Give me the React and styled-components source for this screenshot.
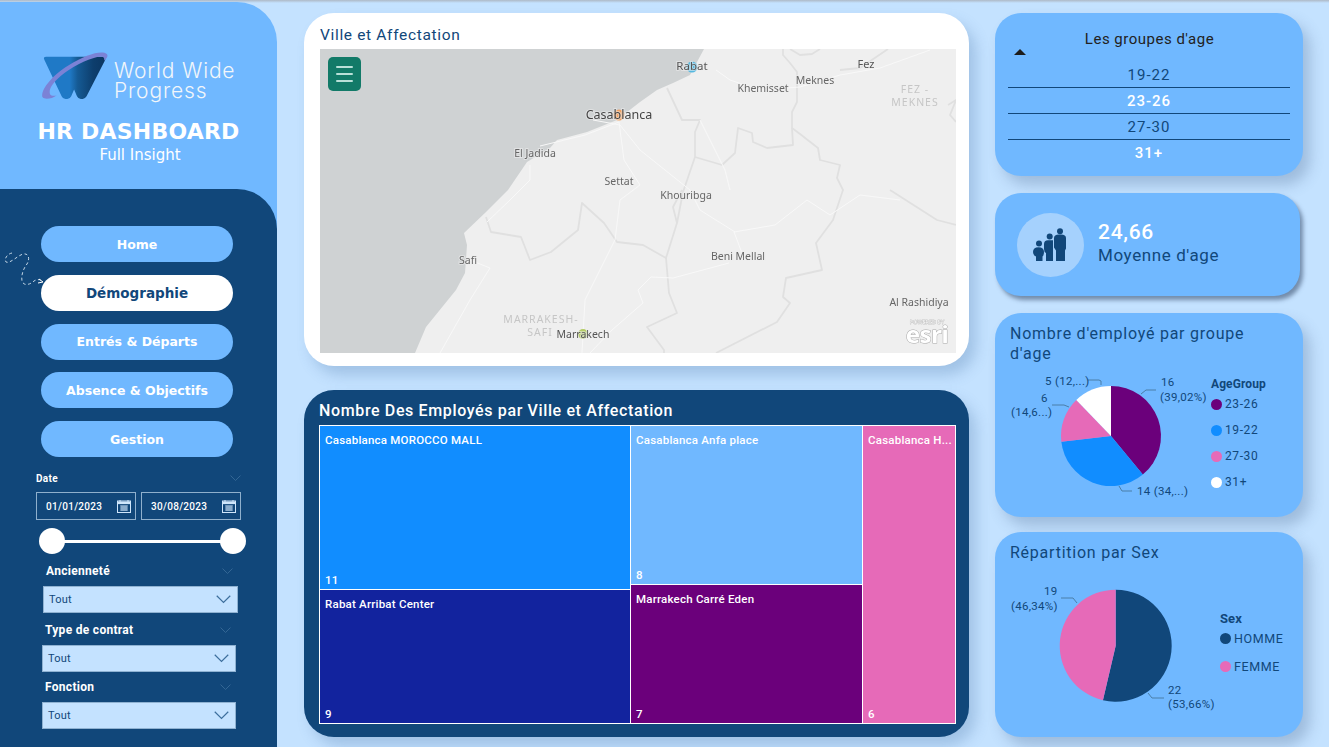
import React from "react";
import styled, { createGlobalStyle } from "styled-components";

const LIGHT = "#70b8ff";
const DARK = "#11477a";
const PALE = "#c4e2ff";
const DIN = `Roboto, "Liberation Sans", sans-serif`;
const VERD = `"DejaVu Sans", Verdana, sans-serif`;

const Global = createGlobalStyle`
  html, body { margin: 0; padding: 0; background: ${PALE}; }
  * { box-sizing: border-box; }
`;

const Page = styled.div`
  width: 1329px; height: 747px; overflow: hidden;
  display: flex; align-items: stretch;
  background: linear-gradient(#aeb9c6 0, ${PALE} 3px);
  font-family: ${DIN};
`;

/* ---------- sidebar ---------- */
const Sidebar = styled.aside`
  width: 277px; margin-top: 2px; flex: none;
  display: flex; flex-direction: column;
  background: ${LIGHT}; border-radius: 0 40px 0 0; overflow: hidden;
`;
const Brand = styled.div`
  height: 187px; flex: none;
  display: flex; flex-direction: column; align-items: center;
  padding: 50px 0 0 3px; color: #fff;
`;
const LogoRow = styled.div`
  display: flex; align-items: center; align-self: flex-start; margin-left: 38px; height: 48px;
`;
const LogoText = styled.div`
  font-family: Inter, sans-serif; font-weight: 300; font-size: 21px; line-height: 20px;
  letter-spacing: .85px; color: #f2f6fa; margin: 10px 0 0 3px; white-space: nowrap;
`;
const Title = styled.div`
  font-family: ${VERD}; font-weight: 700; font-size: 22px; line-height: 24px;
  letter-spacing: .2px; margin: 20px 3px 0 0;
`;
const Subtitle = styled.div`
  font-family: ${VERD}; font-size: 15px; line-height: 18px; margin-top: 2px;
`;
const DarkPane = styled.div`
  flex: 1; background: ${DARK}; border-radius: 0 40px 0 0;
  padding: 37px 0 0; position: relative;
`;
const Nav = styled.nav`
  display: flex; flex-direction: column; gap: 12.75px; padding-left: 41px;
`;
const NavButton = styled.div`
  width: 192px; height: 36px; border-radius: 18px; flex: none;
  display: flex; align-items: center; justify-content: center;
  font-family: ${VERD}; font-weight: 700;
  font-size: ${p => (p.$active ? "13.5px" : "12.5px")};
  background: ${p => (p.$active ? "#fff" : LIGHT)};
  color: ${p => (p.$active ? DARK : "#fff")};
`;
const Trail = styled.svg`
  position: absolute; left: 3px; top: 59px; width: 44px; height: 44px;
`;
const DateHead = styled.div`
  display: flex; justify-content: space-between; align-items: center;
  margin: 13px 36px 0 36px; height: 16px;
  color: #fff; font-size: 10px; font-weight: 700; letter-spacing: .3px;
`;
const DateRow = styled.div`
  display: flex; gap: 5px; margin: 6px 0 0 36px;
`;
const DateBox = styled.div`
  width: 100px; height: 28px; border: 1px solid #8fb0cd;
  display: flex; align-items: center; justify-content: space-between;
  padding: 0 4px 0 9px; color: #fff; font-size: 10px; font-weight: 500; letter-spacing: .3px;
`;
const Slider = styled.div`
  height: 26px; margin: 8px 0 0 39px; width: 207px; position: relative;
  display: flex; align-items: center; justify-content: space-between;
  &::before { content: ""; position: absolute; left: 8px; right: 8px; top: 12px; height: 3px; background: #fff; }
`;
const Knob = styled.span`
  width: 26px; height: 26px; border-radius: 50%; background: #fff; position: relative;
`;
const Filter = styled.div`
  margin: ${p => p.$top}px 0 0 ${p => p.$left}px; width: ${p => p.$width}px;
`;
const FilterHead = styled.div`
  display: flex; justify-content: space-between; align-items: center; height: 16px;
  color: #fff; font-size: 12px; font-weight: 700; letter-spacing: .3px; padding: 0 5px 0 3px;
`;
const Select = styled.div`
  height: 27px; margin-top: 7px; background: ${PALE}; border: 1px solid #8fb2d2;
  display: flex; align-items: center; justify-content: space-between;
  padding: 0 6px 0 5px; color: ${DARK}; font-size: 11px; letter-spacing: .2px;
`;

const Chevron = ({ size = 12, color = "#3a6c98" }) => (
  <svg width={size} height={size * 0.6} viewBox="0 0 20 12" fill="none">
    <path d="M1 1l9 9 9-9" stroke={color} strokeWidth="1.6" />
  </svg>
);
const CalendarIcon = () => (
  <svg width="14" height="13" viewBox="0 0 14 13" fill="none">
    <rect x=".5" y="1" width="13" height="11.5" fill="#11477a" stroke="#cfe6fb" />
    <rect x="1" y="1.5" width="12" height="2.6" fill="#cfe6fb" />
    <path d="M3 0v2M11 0v2" stroke="#cfe6fb" />
    <path d="M3 6h8M3 8h8M3 10h8M5 5.500v5.500M7 5.500v5.500M9 5.500v5.500" stroke="#cfe6fb" strokeWidth=".8" />
  </svg>
);

/* ---------- middle column ---------- */
const Middle = styled.main`
  width: 665px; margin-left: 27px; flex: none;
  display: flex; flex-direction: column; gap: 24px; padding-top: 13px;
`;
const Panel = styled.section`
  border-radius: 30px; display: flex; flex-direction: column;
  box-shadow: 7px 9px 14px rgba(70, 110, 160, .28);
  background: ${p => (p.$dark ? DARK : "#fff")};
  height: ${p => p.$height}px;
  padding: ${p => (p.$dark ? "12px 13px 13px 15px" : "13px 13px 13px 16px")};
`;
const PanelTitle = styled.h2`
  margin: 0; height: ${p => (p.$dark ? 22 : 23)}px; font-size: ${p => (p.$dark ? 16 : 15.5)}px; line-height: 18px;
  font-weight: ${p => (p.$dark ? 500 : 400)};
  letter-spacing: ${p => (p.$dark ? ".63px" : ".66px")};
  color: ${p => (p.$dark ? "#fff" : DARK)};
`;
const MapFrame = styled.div`
  position: relative; width: 636px; height: 304px; background: #efefef; overflow: hidden;
`;
const MapSvg = styled.svg`
  display: block; width: 100%; height: 100%; filter: blur(.35px);
`;
const MenuButton = styled.div`
  position: absolute; left: 8px; top: 8px; width: 33px; height: 34px; border-radius: 5px;
  background: #127a68; display: flex; flex-direction: column; gap: 4.700px;
  align-items: center; justify-content: center;
`;
const MenuLine = styled.span`
  width: 17px; height: 2px; background: #b9e0d8; border-radius: 1px;
`;
const Treemap = styled.div`
  flex: 1; display: flex; background: #fff; padding: 1px; gap: 1px; margin-top: 1px;
`;
const TreeCol = styled.div`
  display: flex; flex-direction: column; gap: 1px; width: ${p => p.$w}px; flex: none;
`;
const TreeCell = styled.div`
  height: ${p => (p.$h ? `${p.$h}px` : "auto")}; flex: ${p => (p.$h ? "none" : 1)};
  background: ${p => p.$bg}; color: #fff;
  display: flex; flex-direction: column; justify-content: space-between;
  padding: 7px 5px 1px; font-size: 11.5px; font-weight: 500; line-height: 15px;
  letter-spacing: .22px; white-space: nowrap; overflow: hidden;
`;

/* ---------- right column ---------- */
const Right = styled.aside`
  width: 308px; margin-left: 26px; flex: none; padding-top: 13px;
  display: flex; flex-direction: column; align-items: flex-start;
`;
const Card = styled.section`
  width: ${p => p.$w || 308}px; height: ${p => p.$h}px; margin-bottom: ${p => p.$mb}px;
  background: ${LIGHT}; border-radius: 26px; flex: none;
  box-shadow: ${p => (p.$hard ? "3px 4px 4px rgba(50, 70, 100, .55)" : "7px 9px 14px rgba(70, 100, 140, .3)")};
`;
const TableCard = styled(Card)`
  padding: 15px 13px 0; display: flex; flex-direction: column;
`;
const TableHead = styled.div`
  text-align: center; font-size: 15px; line-height: 22px; color: #222; letter-spacing: .5px;
  padding-left: 1px; height: 21px;
`;
const Caret = styled.span`
  width: 0; border: 6.500px solid transparent; border-top: 0;
  border-bottom: 6px solid #1c1c1c; margin: 0 0 7px 6px; display: block; height: 6px;
`;
const Row = styled.div`
  height: 26px; display: flex; align-items: center; justify-content: center;
  border-bottom: ${p => (p.$last ? "none" : `1px solid ${DARK}`)};
  font-size: 15px; letter-spacing: 1px;
  font-weight: ${p => (p.$on ? 500 : 400)};
  color: ${p => (p.$on ? "#fff" : DARK)};
`;
const KpiCard = styled(Card)`
  display: flex; align-items: center; padding: 0 0 0 22px; gap: 14px;
`;
const KpiCircle = styled.div`
  width: 67px; height: 64px; border-radius: 50%; background: #a5d1fd;
  display: flex; align-items: center; justify-content: center; padding-right: 2px;
`;
const KpiText = styled.div`
  display: flex; flex-direction: column; padding-bottom: 4px;
`;
const KpiValue = styled.div`
  font-size: 21px; line-height: 25px; font-weight: 500; color: #fff; letter-spacing: .7px;
`;
const KpiLabel = styled.div`
  font-size: 17px; line-height: 21px; color: ${DARK}; letter-spacing: .6px;
`;
const ChartCard = styled(Card)`
  padding: 11px 15px 0; position: relative;
`;
const ChartTitle = styled.h3`
  margin: 0; font-size: 16px; line-height: 20px; font-weight: 400; color: ${DARK};
  letter-spacing: .76px; width: 255px;
`;
const ChartBody = styled.div`
  display: flex; align-items: flex-start; margin: 7px 0 0 -15px;
`;
const PieSvg = styled.svg`
  display: block; flex: none;
`;
const Legend = styled.div`
  display: flex; flex-direction: column; margin-top: ${p => p.$top}px;
  gap: ${p => p.$gap}px;
`;
const LegendTitle = styled.div`
  font-size: ${p => p.$size}px; line-height: 14px; font-weight: 700; color: ${DARK}; letter-spacing: .1px;
  margin-bottom: ${p => p.$mb}px;
`;
const LegendItem = styled.div`
  display: flex; align-items: center; gap: 3px; height: 14px;
  font-size: ${p => p.$size}px; color: ${DARK}; letter-spacing: .6px;
`;
const Dot = styled.span`
  width: 11px; height: 11px; border-radius: 50%; background: ${p => p.$c}; flex: none;
`;

/* ---------- drawings ---------- */
const gray = "#e0e0e0";
const borders = [
  "M783 49 783 55 790 63 797 72 797 85 797 102 792 112 792 128 800 134 818 148 820 160 840 165 837 178 843 190 833 220 816 243 822 270 786 278 783 297 790 303 777 322 716 353",
  "M667 88 682 120 700 120 695 132 695 157 722 165 735 153 738 128 752 133 753 142 767 148 793 145 792 128",
  "M695 157 683 192 677 223 673 207 682 190",
  "M486 217 491 232 521 237 530 260 551 252 578 230 582 203 604 223 617 242 643 245 666 258 677 223",
  "M666 258 669 293 677 313 647 327 664 350 664 353",
  "M890 190 937 220 956 225",
  "M888 49 860 68 840 70",
  "M948 105 956 100 950 115 956 122",
  "M790 49 800 55 812 54 820 49",
];
const whites = [
  "M729 263 673 278 651 277 638 290 643 303 612 330 590 353",
  "M742 253 734 232 775 225 807 200 830 215 860 195 900 200",
  "M593 120 620 125 640 150 665 170 690 190 700 210 735 232",
  "M540 146 585 135 619 122 624 160 640 185 620 200 615 240 585 300 582 353",
  "M470 260 490 268 470 300 440 353",
  "M487 222 510 200 530 180 530 165",
  "M716 70 730 80 760 90 800 87 840 75 880 68 930 50",
  "M730 190 725 170 700 120",
];

const labels = [
  ["Rabat", 692, 70, 11.500, "#555"],
  ["Fez", 866, 68, 11, "#555"],
  ["Meknes", 815, 84, 10.500, "#666"],
  ["Khemisset", 763, 92, 10.500, "#666"],
  ["Casablanca", 619, 119, 12.500, "#444"],
  ["El Jadida", 535, 157, 10.500, "#666"],
  ["Settat", 619, 185, 10.500, "#666"],
  ["Khouribga", 686, 199, 10.500, "#666"],
  ["Safi", 468, 264, 10.500, "#666"],
  ["Beni Mellal", 738, 260, 10.500, "#666"],
  ["Al Rashidiya", 919, 306, 10.500, "#666"],
  ["Marrakech", 583, 338, 10.500, "#555"],
];
const regions = [
  ["FEZ -", 915, 93],
  ["MEKNES", 915, 106],
  ["MARRAKESH-", 541, 323],
  ["SAFI", 540, 336],
];

const MapArt = () => (
  <MapSvg viewBox="320 49 636 304">
    <path
      d="M320 49H704L690 75 673 83 657 90 640 102 617 120 587 132 557 140 550 148 527 162 508 190 486 212 464 233 467 245 465 273 456 290 426 327 415 353H320Z"
      fill="#cfd2d3"
    />
    <g fill="none" stroke={gray} strokeWidth="1.800" strokeLinejoin="round">
      {borders.map(d => <path key={d} d={d} />)}
    </g>
    <g fill="none" stroke="#f8f8f8" strokeWidth="1" strokeLinejoin="round">
      {whites.map(d => <path key={d} d={d} />)}
    </g>
    <circle cx="692" cy="67" r="5.500" fill="#55b8e0" />
    <circle cx="619" cy="115" r="5.500" fill="#f0a060" />
    <circle cx="583" cy="334" r="5" fill="#b4cc66" />
    <g fontFamily={`"Noto Sans", sans-serif`} textAnchor="middle" stroke="#efefef90" strokeWidth="2" paintOrder="stroke">
      {labels.map(([t, x, y, s, c]) => (
        <text key={t} x={x} y={y} fontSize={s} fill={c}>{t}</text>
      ))}
    </g>
    <g fontFamily={`"Noto Sans", sans-serif`} textAnchor="middle" fontSize="10.500" letterSpacing="1" fill="#c6c6c6">
      {regions.map(([t, x, y]) => (
        <text key={t} x={x} y={y}>{t}</text>
      ))}
    </g>
    <g fontFamily={`"Noto Sans", sans-serif`} textAnchor="middle" fill="#fff" stroke="#a9a9a9" strokeWidth="1" paintOrder="stroke">
      <text x="927" y="324" fontSize="5.500" strokeWidth=".6">POWERED BY</text>
      <text x="927" y="343" fontSize="24" fontWeight="700" letterSpacing="-.4">esri</text>
    </g>
  </MapSvg>
);

const polar = (cx, cy, r, pct) => {
  const a = (pct / 100) * 2 * Math.PI;
  return [cx + r * Math.sin(a), cy - r * Math.cos(a)];
};
const slicePath = (cx, cy, r, from, to) => {
  const [x1, y1] = polar(cx, cy, r, from);
  const [x2, y2] = polar(cx, cy, r, to);
  return `M${cx} ${cy}L${x1} ${y1}A${r} ${r} 0 ${to - from > 50 ? 1 : 0} 1 ${x2} ${y2}Z`;
};

const textProps = { fontFamily: DIN, fontSize: 11.5, fill: DARK, letterSpacing: ".3" };

const AgePie = () => (
  <PieSvg width="216" height="147" viewBox="995 371 216 147">
    <path d={slicePath(1111, 436, 50, 0, 39.02)} fill="#6b007b" />
    <path d={slicePath(1111, 436, 50, 39.02, 73.17)} fill="#118dff" />
    <path d={slicePath(1111, 436, 50, 73.17, 87.8)} fill="#e66ab8" />
    <path d={slicePath(1111, 436, 50, 87.8, 100)} fill="#fff" />
    <g fill="none" stroke="#4a7ea8" strokeWidth="1">
      <path d="M1141 394 1146 390H1156" />
      <path d="M1088 380H1099L1101 381V385" />
      <path d="M1052 405H1064L1069 407" />
      <path d="M1119 486 1122 491H1132" />
    </g>
    <g {...textProps}>
      <text x="1161" y="386">16</text>
      <text x="1160" y="401">(39,02%)</text>
      <text x="1045" y="385">5 (12,...)</text>
      <text x="1041" y="402">6</text>
      <text x="1011" y="416">(14,6...)</text>
      <text x="1137" y="495">14 (34,...)</text>
    </g>
  </PieSvg>
);
const SexPie = () => (
  <PieSvg width="225" height="165" viewBox="995 570 225 165">
    <path d={slicePath(1115.7, 645.7, 56, 0, 53.66)} fill={DARK} />
    <path d={slicePath(1115.7, 645.7, 56, 53.66, 100)} fill="#e66ab8" />
    <g fill="none" stroke="#4a7ea8" strokeWidth="1">
      <path d="M1061 598H1073L1077 603" />
      <path d="M1148 693 1152 698H1164" />
    </g>
    <g {...textProps}>
      <text x="1044" y="595">19</text>
      <text x="1011" y="610">(46,34%)</text>
      <text x="1168" y="694">22</text>
      <text x="1168" y="708">(53,66%)</text>
    </g>
  </PieSvg>
);
const Family = () => (
  <svg width="34" height="33" viewBox="0 0 34 33" fill={DARK}>
    <circle cx="27" cy="3.200" r="3" />
    <path d="M23 33V22.500L21 19.500V10Q21 6.500 26 6.500H28Q33 6.500 33 10V20.500L32 22.500V33Z" />
    <circle cx="16.700" cy="8.500" r="3" />
    <path d="M13 33V25Q11 24 11 21V16Q11 12.200 15 12.200H20V33Z" />
    <circle cx="6" cy="15.500" r="3" />
    <path d="M3 33V28.500Q0 27.500 0 24Q0 19.200 5.500 19.200Q11 19.200 11 24Q11 27.500 9.500 28.500V33Z" />
  </svg>
);
const Logo = () => (
  <svg width="70" height="48" viewBox="0 0 72 50">
    <defs>
      <linearGradient id="wv" x1="0" x2="1" y1="0" y2="0">
        <stop offset="0" stopColor="#1f79c6" />
        <stop offset=".42" stopColor="#1f79c6" />
        <stop offset=".55" stopColor="#155a94" />
        <stop offset=".8" stopColor="#0d3e6d" />
        <stop offset="1" stopColor="#0b3662" />
      </linearGradient>
    </defs>
    <path
      d="M3 8q-1.500-3 2-3h59q4 0 2 4L47 46q-2 3-4 3h-2q-2.500 0-4-3l-3-7-3 7q-1.500 3-4 3h-2q-2.500 0-4-3Z"
      fill="url(#wv)"
    />
    <path
      d="M1 47C-1 40 10 25 28 14S62-2 68 2c2 2 0 5-3 7 1-2 0-4-2-4C55 4 36 13 24 22S7 39 9 44c1 2 5 2 7 1-5 4-13 5-15 2Z"
      fill="#7b82d6"
    />
  </svg>
);

const filters = [
  { label: "Ancienneté", top: 9, left: 43, width: 195 },
  { label: "Type de contrat", top: 9, left: 42, width: 194 },
  { label: "Fonction", top: 7, left: 42, width: 194 },
];

export default function App() {
  return (
    <>
      <Global />
      <Page>
        <Sidebar>
          <Brand>
            <LogoRow>
              <Logo />
              <LogoText>World Wide<br />Progress</LogoText>
            </LogoRow>
            <Title>HR DASHBOARD</Title>
            <Subtitle>Full Insight</Subtitle>
          </Brand>
          <DarkPane>
            <Trail viewBox="0 0 44 44" fill="none">
              <path
                d="M9 5C4 6 1 11 3 14c4 2 11-6 17-8 6-1 7 5 4 10-4 5-6 12-5 17 2 6 9 3 12 0 3-2 7-2 9 1"
                stroke="#d8e6f2" strokeWidth=".9" strokeDasharray="3 2.500"
              />
              <path d="M36 31l4 3-5 1" stroke="#fff" strokeWidth="1" />
            </Trail>
            <Nav>
              <NavButton>Home</NavButton>
              <NavButton $active>Démographie</NavButton>
              <NavButton>Entrés &amp; Départs</NavButton>
              <NavButton>Absence &amp; Objectifs</NavButton>
              <NavButton>Gestion</NavButton>
            </Nav>
            <DateHead>
              <span>Date</span>
              <Chevron size={11} />
            </DateHead>
            <DateRow>
              <DateBox>01/01/2023<CalendarIcon /></DateBox>
              <DateBox>30/08/2023<CalendarIcon /></DateBox>
            </DateRow>
            <Slider><Knob /><Knob /></Slider>
            {filters.map(f => (
              <Filter key={f.label} $top={f.top} $left={f.left} $width={f.width}>
                <FilterHead>
                  <span>{f.label}</span>
                  <Chevron size={11} />
                </FilterHead>
                <Select>
                  Tout
                  <Chevron size={15} color="#3d6f9d" />
                </Select>
              </Filter>
            ))}
          </DarkPane>
        </Sidebar>

        <Middle>
          <Panel $height={353}>
            <PanelTitle>Ville et Affectation</PanelTitle>
            <MapFrame>
              <MapArt />
              <MenuButton><MenuLine /><MenuLine /><MenuLine /></MenuButton>
            </MapFrame>
          </Panel>
          <Panel $dark $height={347}>
            <PanelTitle $dark>Nombre Des Employés par Ville et Affectation</PanelTitle>
            <Treemap>
              <TreeCol $w={310}>
                <TreeCell $bg="#118dff" $h={163}><span>Casablanca MOROCCO MALL</span><span>11</span></TreeCell>
                <TreeCell $bg="#12239e"><span>Rabat Arribat Center</span><span>9</span></TreeCell>
              </TreeCol>
              <TreeCol $w={231}>
                <TreeCell $bg={LIGHT} $h={158}><span>Casablanca Anfa place</span><span>8</span></TreeCell>
                <TreeCell $bg="#6b007b"><span>Marrakech Carré Eden</span><span>7</span></TreeCell>
              </TreeCol>
              <TreeCol $w={92}>
                <TreeCell $bg="#e66ab8"><span>Casablanca H...</span><span>6</span></TreeCell>
              </TreeCol>
            </Treemap>
          </Panel>
        </Middle>

        <Right>
          <TableCard $h={163} $mb={17}>
            <TableHead>Les groupes d'age</TableHead>
            <Caret />
            <Row>19-22</Row>
            <Row $on>23-26</Row>
            <Row>27-30</Row>
            <Row $on $last>31+</Row>
          </TableCard>
          <KpiCard $w={305} $h={103} $mb={17} $hard>
            <KpiCircle><Family /></KpiCircle>
            <KpiText>
              <KpiValue>24,66</KpiValue>
              <KpiLabel>Moyenne d'age</KpiLabel>
            </KpiText>
          </KpiCard>
          <ChartCard $h={204} $mb={15}>
            <ChartTitle>Nombre d'employé par groupe d'age</ChartTitle>
            <ChartBody>
              <AgePie />
              <Legend $top={6} $gap={12}>
                <LegendTitle $size={12} $mb={-6}>AgeGroup</LegendTitle>
                {[["#6b007b", "23-26"], ["#118dff", "19-22"], ["#e66ab8", "27-30"], ["#fff", "31+"]].map(([c, t]) => (
                  <LegendItem key={t} $size={12}><Dot $c={c} />{t}</LegendItem>
                ))}
              </Legend>
            </ChartBody>
          </ChartCard>
          <ChartCard $h={205} $mb={0}>
            <ChartTitle>Répartition par Sex</ChartTitle>
            <ChartBody>
              <SexPie />
              <Legend $top={42} $gap={14}>
                <LegendTitle $size={13} $mb={-9}>Sex</LegendTitle>
                {[[DARK, "HOMME"], ["#e66ab8", "FEMME"]].map(([c, t]) => (
                  <LegendItem key={t} $size={12.5}><Dot $c={c} />{t}</LegendItem>
                ))}
              </Legend>
            </ChartBody>
          </ChartCard>
        </Right>
      </Page>
    </>
  );
}
